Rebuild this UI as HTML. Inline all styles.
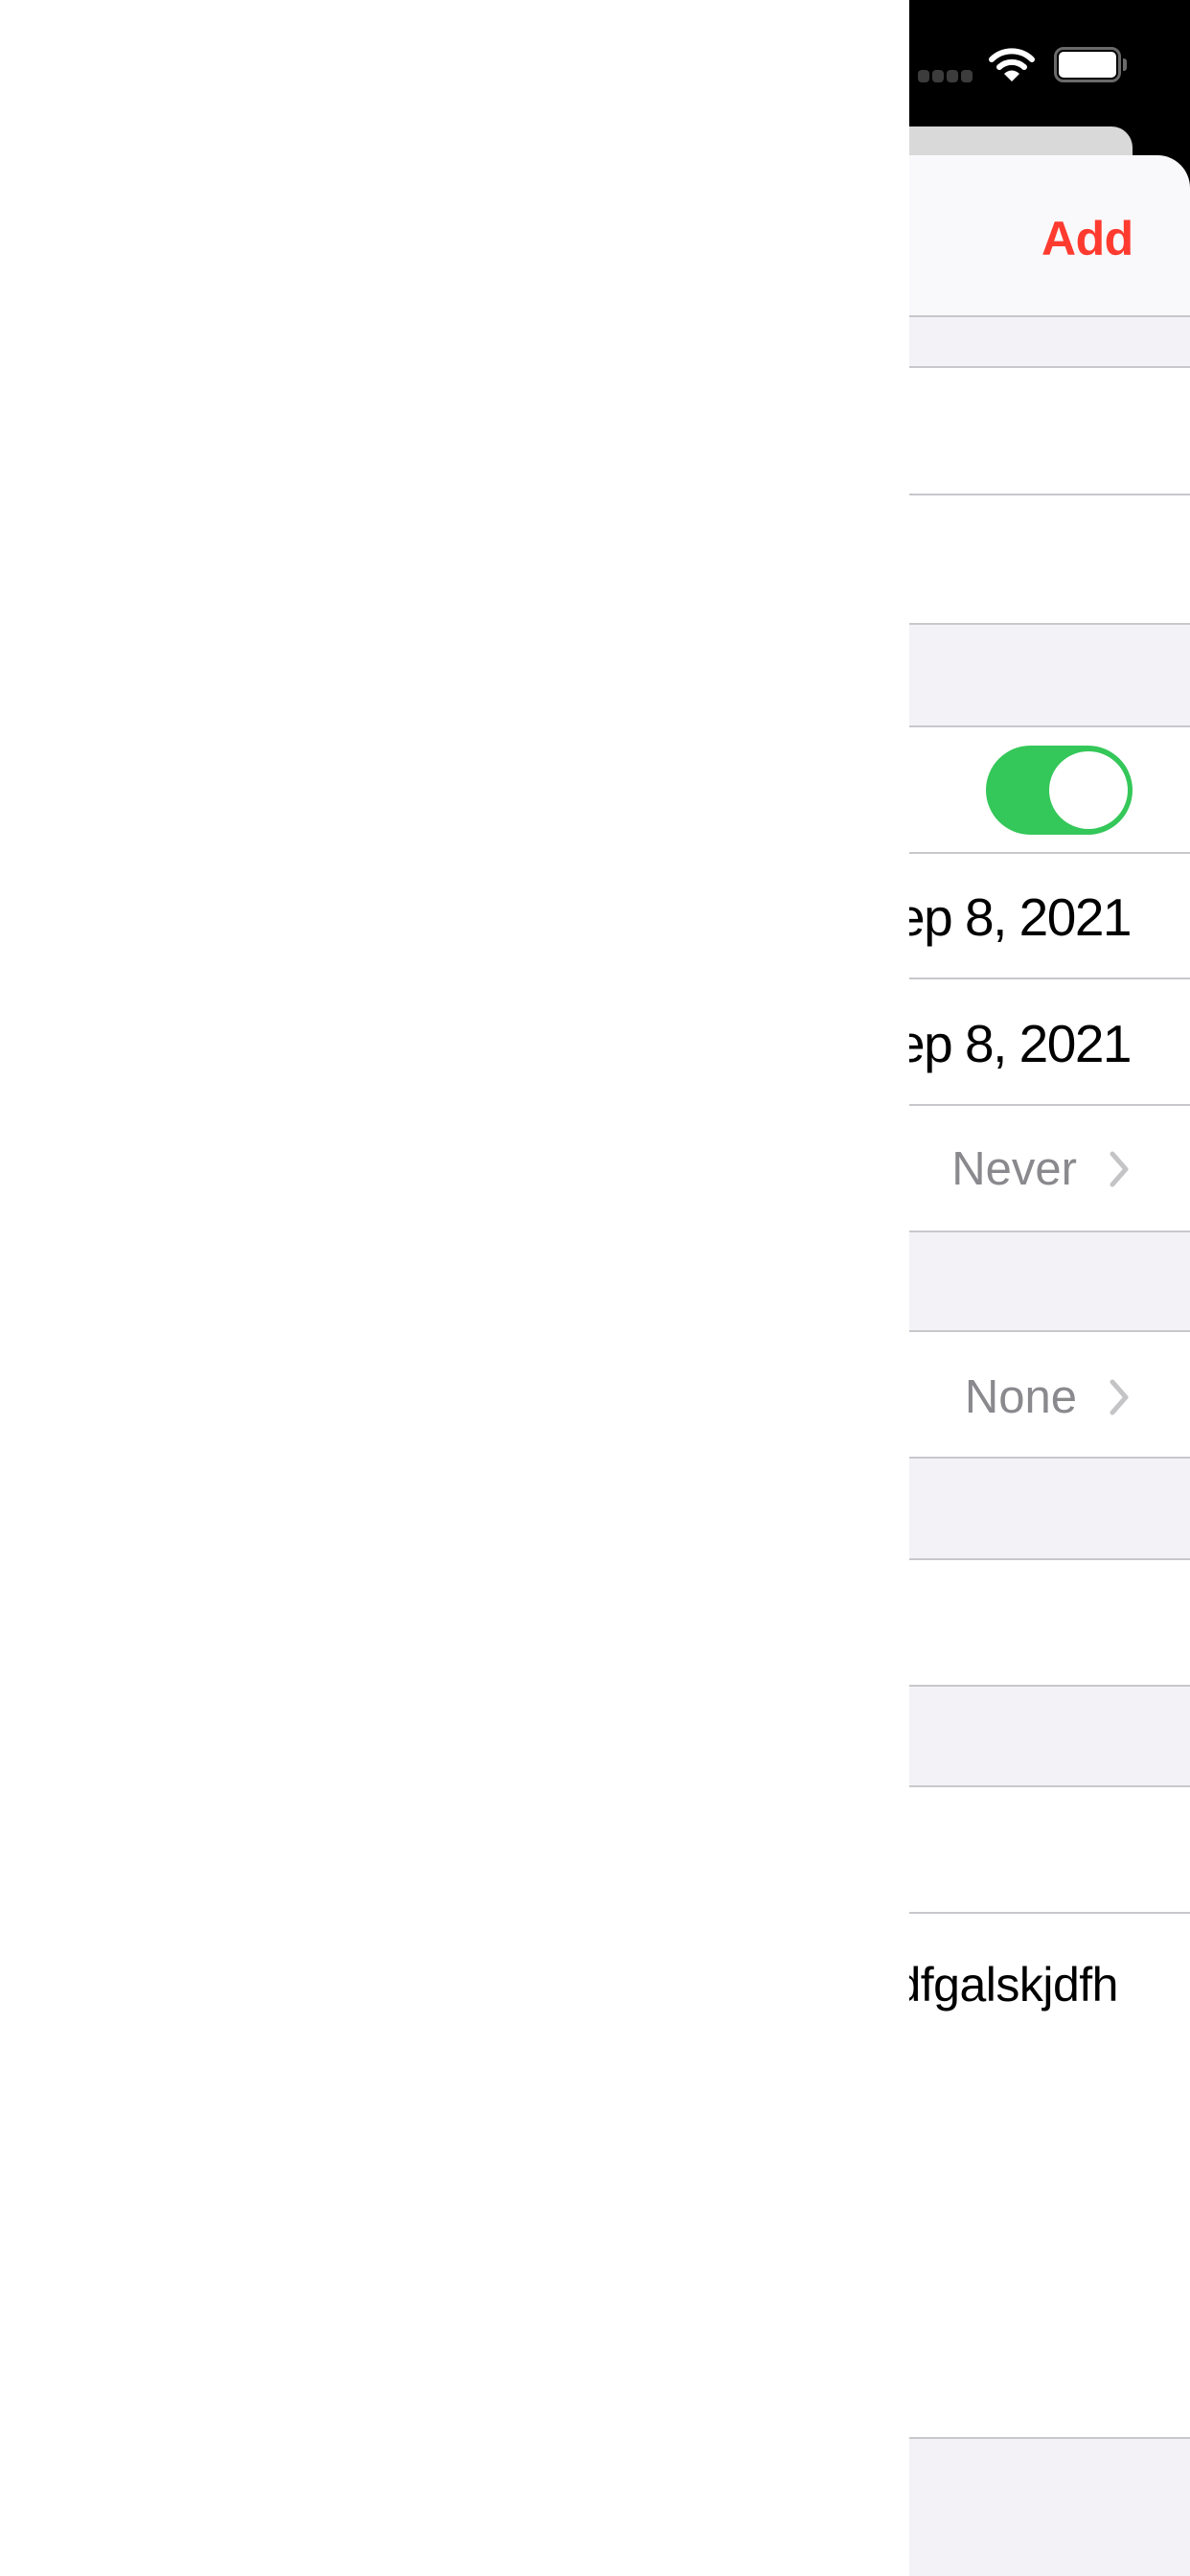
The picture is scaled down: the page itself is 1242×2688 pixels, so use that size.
<!DOCTYPE html>
<html><head><meta charset="utf-8"><style>
*{margin:0;padding:0;box-sizing:border-box}
body{width:1242px;height:2688px;background:#fff;position:relative;overflow:hidden;font-family:"Liberation Sans",Arial,sans-serif}
.a{position:absolute}
.clip{position:absolute;left:949px;top:0;width:293px;height:2688px;overflow:hidden}
.g{position:absolute;left:0;width:293px;background:#f2f2f7}
.l{position:absolute;left:0;width:293px;height:2px;background:#c8c8cc}
.t{position:absolute;right:62px;font-size:55px;letter-spacing:-1.5px;color:#000;white-space:nowrap}
.v{position:absolute;right:118px;font-size:49px;color:#8a8a8e;white-space:nowrap}
.ch{position:absolute;left:206px;width:26px;height:40px}
.d{position:absolute;top:73px;width:12px;height:13px;border-radius:4px;background:#3c3c3c}
</style></head><body>
<div class="clip">
 <div class="a" style="left:0;top:0;width:293px;height:200px;background:#000"></div>
 <div class="d" style="left:9px"></div>
 <div class="d" style="left:24px"></div>
 <div class="d" style="left:39px"></div>
 <div class="d" style="left:54px"></div>
 <svg class="a" style="left:83px;top:48px" width="48" height="38" viewBox="0 0 48 38"><path d="M3 14 A30 30 0 0 1 45 14" stroke="#fff" stroke-width="6" fill="none" stroke-linecap="round"/><path d="M11 22 A19 19 0 0 1 37 22" stroke="#fff" stroke-width="6" fill="none" stroke-linecap="round"/><path d="M16 29 L24 37 L32 29 A11 11 0 0 0 16 29Z" fill="#fff"/></svg>
 <div class="a" style="left:151px;top:49px;width:70px;height:37px;border:3px solid #6a6a6a;border-radius:10px"></div>
 <div class="a" style="left:156px;top:54px;width:60px;height:27px;background:#fff;border-radius:5px"></div>
 <div class="a" style="left:223px;top:61px;width:4px;height:13px;background:#6a6a6a;border-radius:0 3px 3px 0"></div>
 <div class="a" style="left:0;top:132px;width:233px;height:80px;background:#d9d9d9;border-radius:0 22px 0 0"></div>
 <div class="a" style="left:0;top:162px;width:293px;height:168px;background:#f9f9fb;border-radius:0 34px 0 0"></div>
 <div class="a" style="left:138px;top:220px;font-size:50px;font-weight:bold;letter-spacing:-0.5px;color:#ff3b30">Add</div>
 <div class="l" style="top:329px"></div>
 <div class="g" style="top:331px;height:52px"></div>
 <div class="l" style="top:382px"></div>
 <div class="l" style="top:515px"></div>
 <div class="l" style="top:650px"></div>
 <div class="g" style="top:652px;height:105px"></div>
 <div class="l" style="top:757px"></div>
 <div class="a" style="left:80px;top:778px;width:153px;height:93px;border-radius:47px;background:#34c759"></div>
 <div class="a" style="left:146px;top:784px;width:82px;height:81px;border-radius:50%;background:#fff"></div>
 <div class="l" style="top:889px"></div>
 <div class="t" style="top:925px">Sep 8, 2021</div>
 <div class="l" style="top:1020px"></div>
 <div class="t" style="top:1057px">Sep 8, 2021</div>
 <div class="l" style="top:1152px"></div>
 <div class="v" style="top:1192px">Never</div>
 <svg class="ch" style="top:1200px" viewBox="0 0 26 40"><path d="M6 4 L20 20 L6 36" stroke="#c4c4c7" stroke-width="5" fill="none" stroke-linecap="round" stroke-linejoin="round"/></svg>
 <div class="l" style="top:1284px"></div>
 <div class="g" style="top:1286px;height:103px"></div>
 <div class="l" style="top:1388px"></div>
 <div class="v" style="top:1430px">None</div>
 <svg class="ch" style="top:1438px" viewBox="0 0 26 40"><path d="M6 4 L20 20 L6 36" stroke="#c4c4c7" stroke-width="5" fill="none" stroke-linecap="round" stroke-linejoin="round"/></svg>
 <div class="l" style="top:1520px"></div>
 <div class="g" style="top:1522px;height:105px"></div>
 <div class="l" style="top:1626px"></div>
 <div class="l" style="top:1758px"></div>
 <div class="g" style="top:1760px;height:104px"></div>
 <div class="l" style="top:1863px"></div>
 <div class="l" style="top:1995px"></div>
 <div class="t" style="top:2042px;right:75px;font-size:50px;letter-spacing:-0.5px">asdfgalskjdfh</div>
 <div class="l" style="top:2543px"></div>
 <div class="g" style="top:2545px;height:143px"></div>
</div>
</body></html>
